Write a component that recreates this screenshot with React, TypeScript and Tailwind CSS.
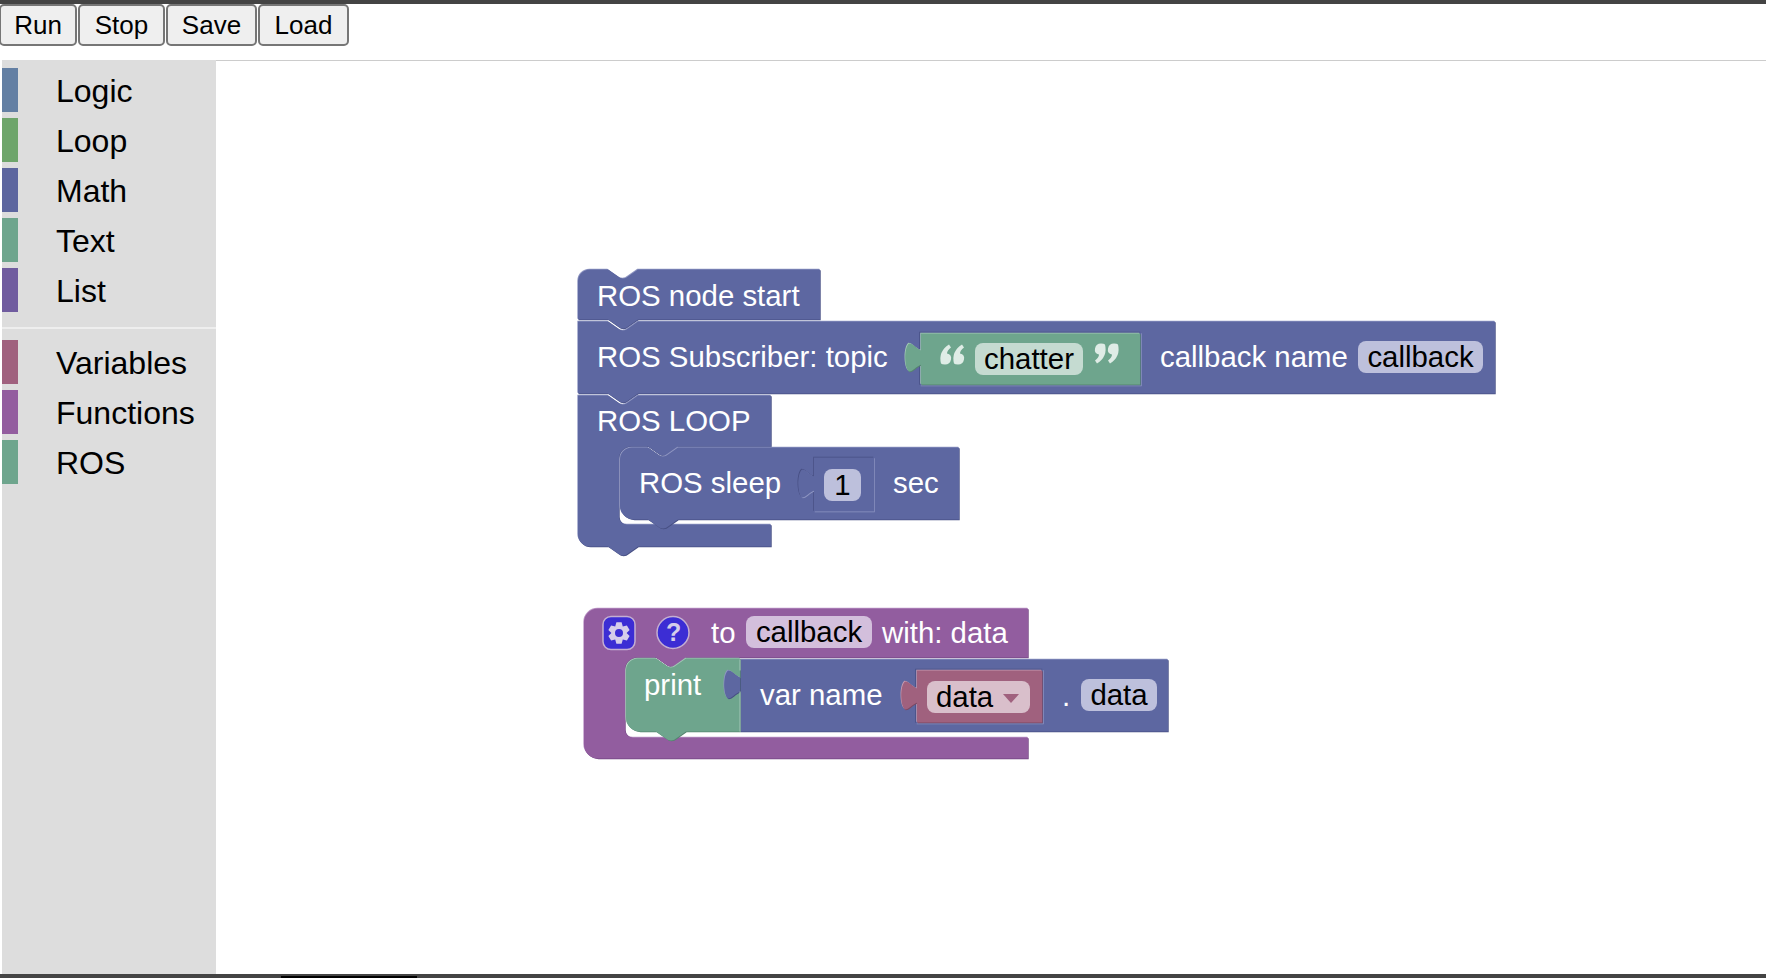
const CATEGORIES_TOP = [
  { name: 'Logic', swatch: 'bg-[#637fa3]' },
  { name: 'Loop', swatch: 'bg-[#6ea56b]' },
  { name: 'Math', swatch: 'bg-[#5d669f]' },
  { name: 'Text', swatch: 'bg-[#6ea58d]' },
  { name: 'List', swatch: 'bg-[#705c9f]' },
];

const CATEGORIES_BOTTOM = [
  { name: 'Variables', swatch: 'bg-[#a0617e]' },
  { name: 'Functions', swatch: 'bg-[#935d9f]' },
  { name: 'ROS', swatch: 'bg-[#6ea58d]' },
];

const BUTTONS = [
  { label: 'Run', width: 'w-[78px] -ml-[1px]' },
  { label: 'Stop', width: 'w-[87px]' },
  { label: 'Save', width: 'w-[91px]' },
  { label: 'Load', width: 'w-[91px]' },
];

const INDIGO = { fill: '#5d67a1', light: '#8f96c2', dark: '#474f83' };
const GREEN = { fill: '#6ea58d', light: '#a3c7b6', dark: '#55846f' };
const PURPLE = { fill: '#925d9f', light: '#bd97c7', dark: '#714580' };
const ROSE = { fill: '#a0617e', light: '#c69bb0', dark: '#7d4862' };

// blockly style connector shapes
const notch = 'l 10,7 q 2,2 5,2 t 5,-2 l 10,-7';
const notchBack = 'l -10,7 q -2,2 -5,2 t -5,-2 l -10,-7';
const tab = (x: number, y: number) =>
  `M ${x},${y + 7} C ${x - 5},${y + 5} ${x - 8},${y} ${x - 12},${y} C ${x - 17},${y + 4} ${x - 17},${y + 24} ${x - 12},${y + 28} C ${x - 8},${y + 28} ${x - 5},${y + 23} ${x},${y + 21} Z`;
const rect = (x1: number, y1: number, x2: number, y2: number) => `M ${x1},${y1} H ${x2} V ${y2} H ${x1} Z`;

function gear(cx: number, cy: number) {
  const pts: string[] = [];
  for (let i = 0; i < 6; i++) {
    const a = (i * Math.PI) / 3 - Math.PI / 2;
    const spots: [number, number][] = [[-0.52, 7.6], [-0.24, 11], [0.24, 11], [0.52, 7.6]];
    spots.forEach(([da, r]) => {
      pts.push(`${(cx + Math.cos(a + da) * r).toFixed(1)},${(cy + Math.sin(a + da) * r).toFixed(1)}`);
    });
  }
  return `M ${pts.join(' L ')} Z M ${cx + 4},${cy} a 4,4 0 1 0 -8,0 a 4,4 0 1 0 8,0 Z`;
}

type Tone = { fill: string; light: string; dark: string };

function Shape({ d, tone, sunk }: { d: string; tone: Tone; sunk?: boolean }) {
  const first = sunk ? tone.dark : tone.light;
  const second = sunk ? tone.light : tone.dark;
  return (
    <g>
      <path d={d} fill={first} transform="translate(-0.7,-0.7)" />
      <path d={d} fill={second} transform="translate(0.7,0.7)" />
      <path d={d} fill={tone.fill} />
    </g>
  );
}

function Label({ className, children }: { className: string; children: React.ReactNode }) {
  return <span className={`absolute text-[29.4px] leading-[32px] whitespace-nowrap text-white ${className}`}>{children}</span>;
}

function Field({ className, children }: { className: string; children: React.ReactNode }) {
  return (
    <span className={`absolute flex h-[32px] items-center justify-center rounded-[8px] text-[29.4px] leading-[32px] whitespace-nowrap text-black ${className}`}>
      {children}
    </span>
  );
}

function BlockShapes() {
  return (
    <svg className="absolute inset-0 h-full w-full" viewBox="216 61 1550 913">
      {/* ROS node start */}
      <Shape tone={INDIGO} d={`M 578,282 a 12,12 0 0 1 12,-12 H 608 ${notch} H 820 V 320 H 638 ${notchBack} H 578 Z`} />
      {/* ROS Subscriber */}
      <Shape tone={INDIGO} d={`M 578,322 H 608 ${notch} H 1495 V 394 H 638 ${notchBack} H 578 Z`} />
      <Shape tone={INDIGO} sunk d={rect(920, 333, 1141, 386)} />
      <Shape tone={GREEN} d={`${rect(921, 334, 1140, 385)} ${tab(921, 344)}`} />
      <path d="M 941,364 q -3,-12 8,-19 l 2,3 q -4,3 -4,6 q 5,1 4,6 q -1,5 -6,5 q -3,0 -4,-1 Z M 954,364 q -3,-12 8,-19 l 2,3 q -4,3 -4,6 q 5,1 4,6 q -1,5 -6,5 q -3,0 -4,-1 Z" fill="#dfece6" />
      <path d="M 1118,345 q 3,12 -8,19 l -2,-3 q 4,-3 4,-6 q -5,-1 -4,-6 q 1,-5 6,-5 q 3,0 4,1 Z M 1105,345 q 3,12 -8,19 l -2,-3 q 4,-3 4,-6 q -5,-1 -4,-6 q 1,-5 6,-5 q 3,0 4,1 Z" fill="#dfece6" />
      {/* ROS LOOP */}
      <Shape tone={INDIGO} d={`M 578,396 H 608 ${notch} H 771 V 447 H 678 ${notchBack} H 631 a 12,12 0 0 0 -12,12 V 517 a 8,8 0 0 0 8,8 H 771 V 547 H 638 ${notchBack} H 590 a 12,12 0 0 1 -12,-12 Z`} />
      {/* ROS sleep */}
      <Shape tone={INDIGO} d={`M 620,460 a 12,12 0 0 1 12,-12 H 648 ${notch} H 959 V 520 H 678 ${notchBack} H 634 a 14,14 0 0 1 -14,-14 Z`} />
      <Shape tone={INDIGO} sunk d={`${rect(814, 458, 874, 512)} ${tab(814, 470)}`} />
      {/* function definition */}
      <Shape tone={PURPLE} d={`M 584,623 a 14,14 0 0 1 14,-14 H 1028 V 658 H 686 ${notchBack} H 637 a 12,12 0 0 0 -12,12 V 730 a 8,8 0 0 0 8,8 H 1028 V 759 H 598 a 14,14 0 0 1 -14,-14 Z`} />
      <rect x="603" y="617" width="32" height="33" rx="8" fill="#3c2dd4" stroke="#c4aed2" strokeWidth="1.5" />
      <path d={gear(619, 633.5)} fill="#d6cdea" fillRule="evenodd" />
      <circle cx="673" cy="633" r="16" fill="#3c2dd4" stroke="#c4aed2" strokeWidth="1.5" />
      {/* print + var */}
      <Shape tone={INDIGO} d={rect(740, 660, 1168, 732)} />
      <Shape tone={GREEN} d={`M 626,671 a 12,12 0 0 1 12,-12 H 656 ${notch} H 740 V 732 H 686 ${notchBack} H 640 a 14,14 0 0 1 -14,-14 Z`} />
      <Shape tone={INDIGO} d={tab(740, 671)} />
      <path d="M 740,660 V 671 M 740,692 V 732" stroke={GREEN.light} strokeWidth="1" />
      <Shape tone={INDIGO} sunk d={rect(916, 670, 1043, 724)} />
      <Shape tone={ROSE} d={`${rect(917, 671, 1042, 723)} ${tab(917, 682)}`} />
    </svg>
  );
}

export default function App() {
  return (
    <div className="flex h-[978px] w-[1766px] flex-col overflow-hidden bg-white font-['Liberation_Sans',Arial,sans-serif]">
      <div className="h-[4px] bg-[#444444]" />

      {/* Toolbar */}
      <div className="flex h-[56px] shrink-0 gap-[1px]">
        {BUTTONS.map(b => (
          <button
            key={b.label}
            className={`h-[42px] rounded-[5px] border-2 border-[#767676] bg-[#efefef] text-center text-[26px] leading-none text-black ${b.width}`}
          >
            {b.label}
          </button>
        ))}
      </div>

      <div className="flex min-h-0 flex-1 pl-[2px]">
        {/* Toolbox */}
        <div className="w-[214px] shrink-0 bg-[#dddddd] pt-[8px]">
          <div className="flex flex-col gap-[6px]">
            {CATEGORIES_TOP.map(c => (
              <div key={c.name} className="flex h-[44px] items-center">
                <span className={`h-full w-[16px] ${c.swatch}`} />
                <span className="ml-[38px] pt-[2px] text-[32px] leading-none text-black">{c.name}</span>
              </div>
            ))}
          </div>
          <div className="mt-[15px] mb-[11px] h-[2px] bg-[#eeeeee]" />
          <div className="flex flex-col gap-[6px]">
            {CATEGORIES_BOTTOM.map(c => (
              <div key={c.name} className="flex h-[44px] items-center">
                <span className={`h-full w-[16px] ${c.swatch}`} />
                <span className="ml-[38px] pt-[2px] text-[32px] leading-none text-black">{c.name}</span>
              </div>
            ))}
          </div>
        </div>

        {/* Workspace */}
        <div className="relative flex-1 border-t border-[#cccccc]">
          <div className="absolute top-[-1px] right-0 bottom-0 left-0">
            <BlockShapes />

            <Label className="top-[220px] left-[381px]">ROS node start</Label>
            <Label className="top-[281px] left-[381px]">ROS Subscriber: topic</Label>
            <Field className="top-[283px] left-[759px] w-[108px] bg-[#c5dbd1]">chatter</Field>
            <Label className="top-[281px] left-[944px]">callback name</Label>
            <Field className="top-[281px] left-[1142px] w-[125px] bg-[#bdc0dc]">callback</Field>

            <Label className="top-[345px] left-[381px]">ROS LOOP</Label>
            <Label className="top-[407px] left-[423px]">ROS sleep</Label>
            <Field className="top-[409px] left-[608px] w-[37px] bg-[#bdc0dc]">1</Field>
            <Label className="top-[407px] left-[677px]">sec</Label>

            <span className="absolute top-[556px] left-[450px] text-[25px] leading-[32px] font-bold text-[#d6cdea]">?</span>
            <Label className="top-[557px] left-[495px]">to</Label>
            <Field className="top-[556px] left-[530px] w-[126px] bg-[#d3bfdc]">callback</Field>
            <Label className="top-[557px] left-[666px]">with: data</Label>

            <Label className="top-[609px] left-[428px]">print</Label>
            <Label className="top-[619px] left-[544px]">var name</Label>
            <Field className="top-[621px] left-[711px] w-[103px] justify-start bg-[#d9bfcb] pl-[9px]">
              data
              <svg className="absolute top-[13px] left-[76px] h-[9px] w-[16px]" viewBox="0 0 16 9">
                <path d="M 0,0 H 16 L 8,9 Z" fill="#a0617e" />
              </svg>
            </Field>
            <Label className="top-[620px] left-[846px]">.</Label>
            <Field className="top-[619px] left-[865px] w-[76px] bg-[#bdc0dc]">data</Field>
          </div>
        </div>
      </div>

      <div className="flex h-[4px] shrink-0 items-end bg-[#444444]">
        <div className="ml-[281px] h-[2px] w-[136px] bg-black" />
      </div>
    </div>
  );
}
